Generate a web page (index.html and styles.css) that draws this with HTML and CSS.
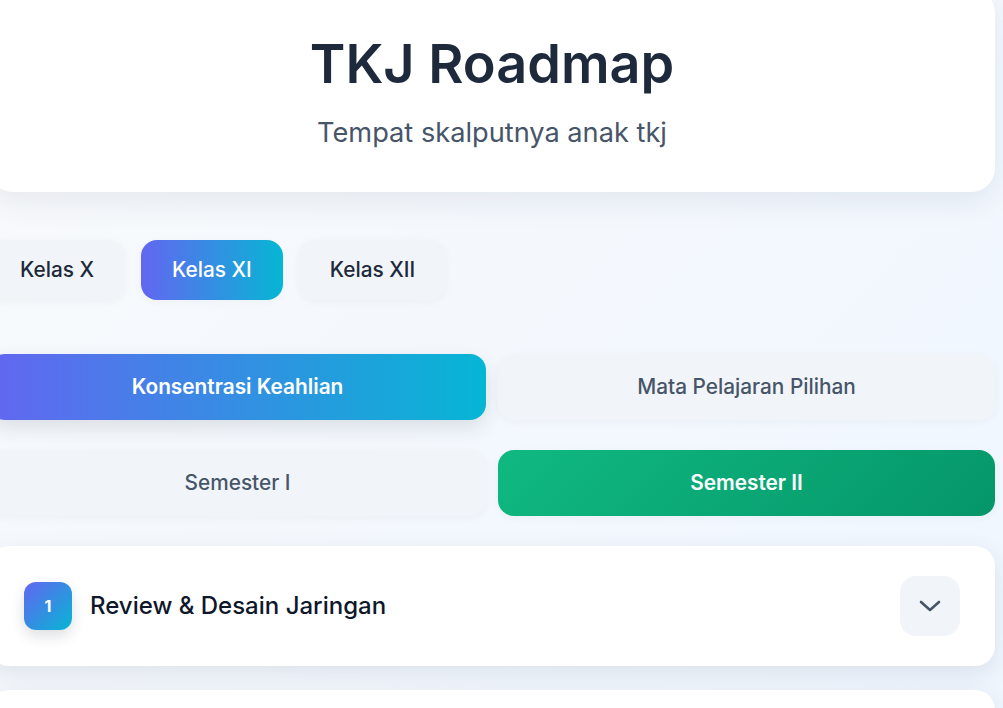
FILE: index.html
```html
<!DOCTYPE html>
<html lang="id">
<head>
    <meta charset="UTF-8">
    <meta name="viewport" content="width=device-width, initial-scale=1.0">
    <title>TKJ Roadmap</title>
    <link rel="stylesheet" href="styles.css">
</head>
<body>
    <div class="roadmap-container">
        <header class="page-header">
            <h1 class="page-title">TKJ Roadmap</h1>
            <p class="page-subtitle">Tempat skalputnya anak tkj</p>
        </header>

        <div class="kelas-tabs">
            <button class="kelas-btn">Kelas X</button>
            <button class="kelas-btn active">Kelas XI</button>
            <button class="kelas-btn">Kelas XII</button>
        </div>

        <div class="tab-grid">
            <button class="tab-btn active">Konsentrasi Keahlian</button>
            <button class="tab-btn">Mata Pelajaran Pilihan</button>
        </div>

        <div class="tab-grid semester-grid">
            <button class="tab-btn">Semester I</button>
            <button class="tab-btn active-green">Semester II</button>
        </div>

        <div class="materi-list">
            <div class="materi-card">
                <div class="materi-info">
                    <span class="materi-number">1</span>
                    <span class="materi-title">Review &amp; Desain Jaringan</span>
                </div>
                <button class="toggle-btn">
                    <svg width="22" height="12" viewBox="0 0 22 12" fill="none">
                        <polyline points="2,2 11,10 20,2" stroke="#475569" stroke-width="2.6" stroke-linecap="round" stroke-linejoin="round"/>
                    </svg>
                </button>
            </div>
            <div class="materi-card">
                <div class="materi-info">
                    <span class="materi-number">2</span>
                    <span class="materi-title">Routing Dinamis</span>
                </div>
                <button class="toggle-btn">
                    <svg width="22" height="12" viewBox="0 0 22 12" fill="none">
                        <polyline points="2,2 11,10 20,2" stroke="#475569" stroke-width="2.6" stroke-linecap="round" stroke-linejoin="round"/>
                    </svg>
                </button>
            </div>
        </div>
    </div>
</body>
</html>
```

FILE: styles.css
```css
* {
    box-sizing: border-box;
}

body {
    margin: 0;
    font-family: "Inter", "Noto Sans", sans-serif;
    background: linear-gradient(135deg, #f8fafc 0%, #eff6ff 100%);
    min-height: 100vh;
    overflow: hidden;
}

/* halaman sedikit tergeser (scroll) */
.roadmap-container {
    width: 1006px;
    margin: -11px 0 0 -11px;
}

.page-header {
    background: #fff;
    border-radius: 24px;
    padding: 43px 20px 38px;
    text-align: center;
    box-shadow: 0 10px 30px rgba(30, 41, 59, 0.08);
}

.page-title {
    margin: 0 0 16px;
    font-size: 54px;
    line-height: 1.2;
    font-weight: 600;
    color: #1e293b;
}

.page-subtitle {
    margin: 0;
    font-size: 27.2px;
    line-height: 1.5;
    color: #475569;
}

.kelas-tabs {
    display: flex;
    gap: 16px;
    margin: 48px 0 54px;
}

.kelas-btn {
    font-family: inherit;
    font-size: 20.8px;
    font-weight: 500;
    line-height: 26px;
    padding: 17px 31px;
    border: none;
    border-radius: 16px;
    background: #f1f5f9;
    color: #1e293b;
    box-shadow: 0 2px 8px rgba(30, 41, 59, 0.04);
    cursor: pointer;
}

.kelas-btn.active {
    background: linear-gradient(90deg, #6366f1, #06b6d4);
    color: #fff;
}

.tab-grid {
    display: grid;
    grid-template-columns: 1fr 1fr;
    gap: 12px;
    margin-bottom: 30px;
}

.tab-btn {
    font-family: inherit;
    font-size: 20.8px;
    font-weight: 500;
    line-height: 26px;
    padding: 20px;
    border: none;
    border-radius: 16px;
    background: #f1f5f9;
    color: #475569;
    box-shadow: 0 2px 8px rgba(30, 41, 59, 0.04);
    cursor: pointer;
}

.tab-btn.active {
    background: linear-gradient(90deg, #6366f1, #06b6d4);
    color: #fff;
    font-weight: 600;
    box-shadow: 0 8px 20px rgba(30, 41, 59, 0.12);
}

.tab-btn.active-green {
    background: linear-gradient(135deg, #10b981, #059669);
    color: #fff;
    font-weight: 600;
}

.materi-list {
    display: flex;
    flex-direction: column;
    gap: 24px;
}

.materi-card {
    display: flex;
    align-items: center;
    justify-content: space-between;
    background: #fff;
    border-radius: 20px;
    padding: 30px 35px;
    box-shadow: 0 8px 24px rgba(30, 41, 59, 0.1);
}

.materi-info {
    display: flex;
    align-items: center;
    gap: 18px;
}

.materi-number {
    width: 48px;
    height: 48px;
    border-radius: 12px;
    background: linear-gradient(135deg, #6366f1, #06b6d4);
    color: #fff;
    font-size: 16px;
    font-weight: 700;
    display: flex;
    align-items: center;
    justify-content: center;
    box-shadow: 0 6px 14px rgba(30, 41, 59, 0.15);
}

.materi-title {
    font-size: 24px;
    font-weight: 500;
    color: #0f172a;
}

.toggle-btn {
    width: 60px;
    height: 60px;
    border: none;
    border-radius: 16px;
    background: #f1f5f9;
    display: flex;
    align-items: center;
    justify-content: center;
    cursor: pointer;
    padding: 0;
}
```
